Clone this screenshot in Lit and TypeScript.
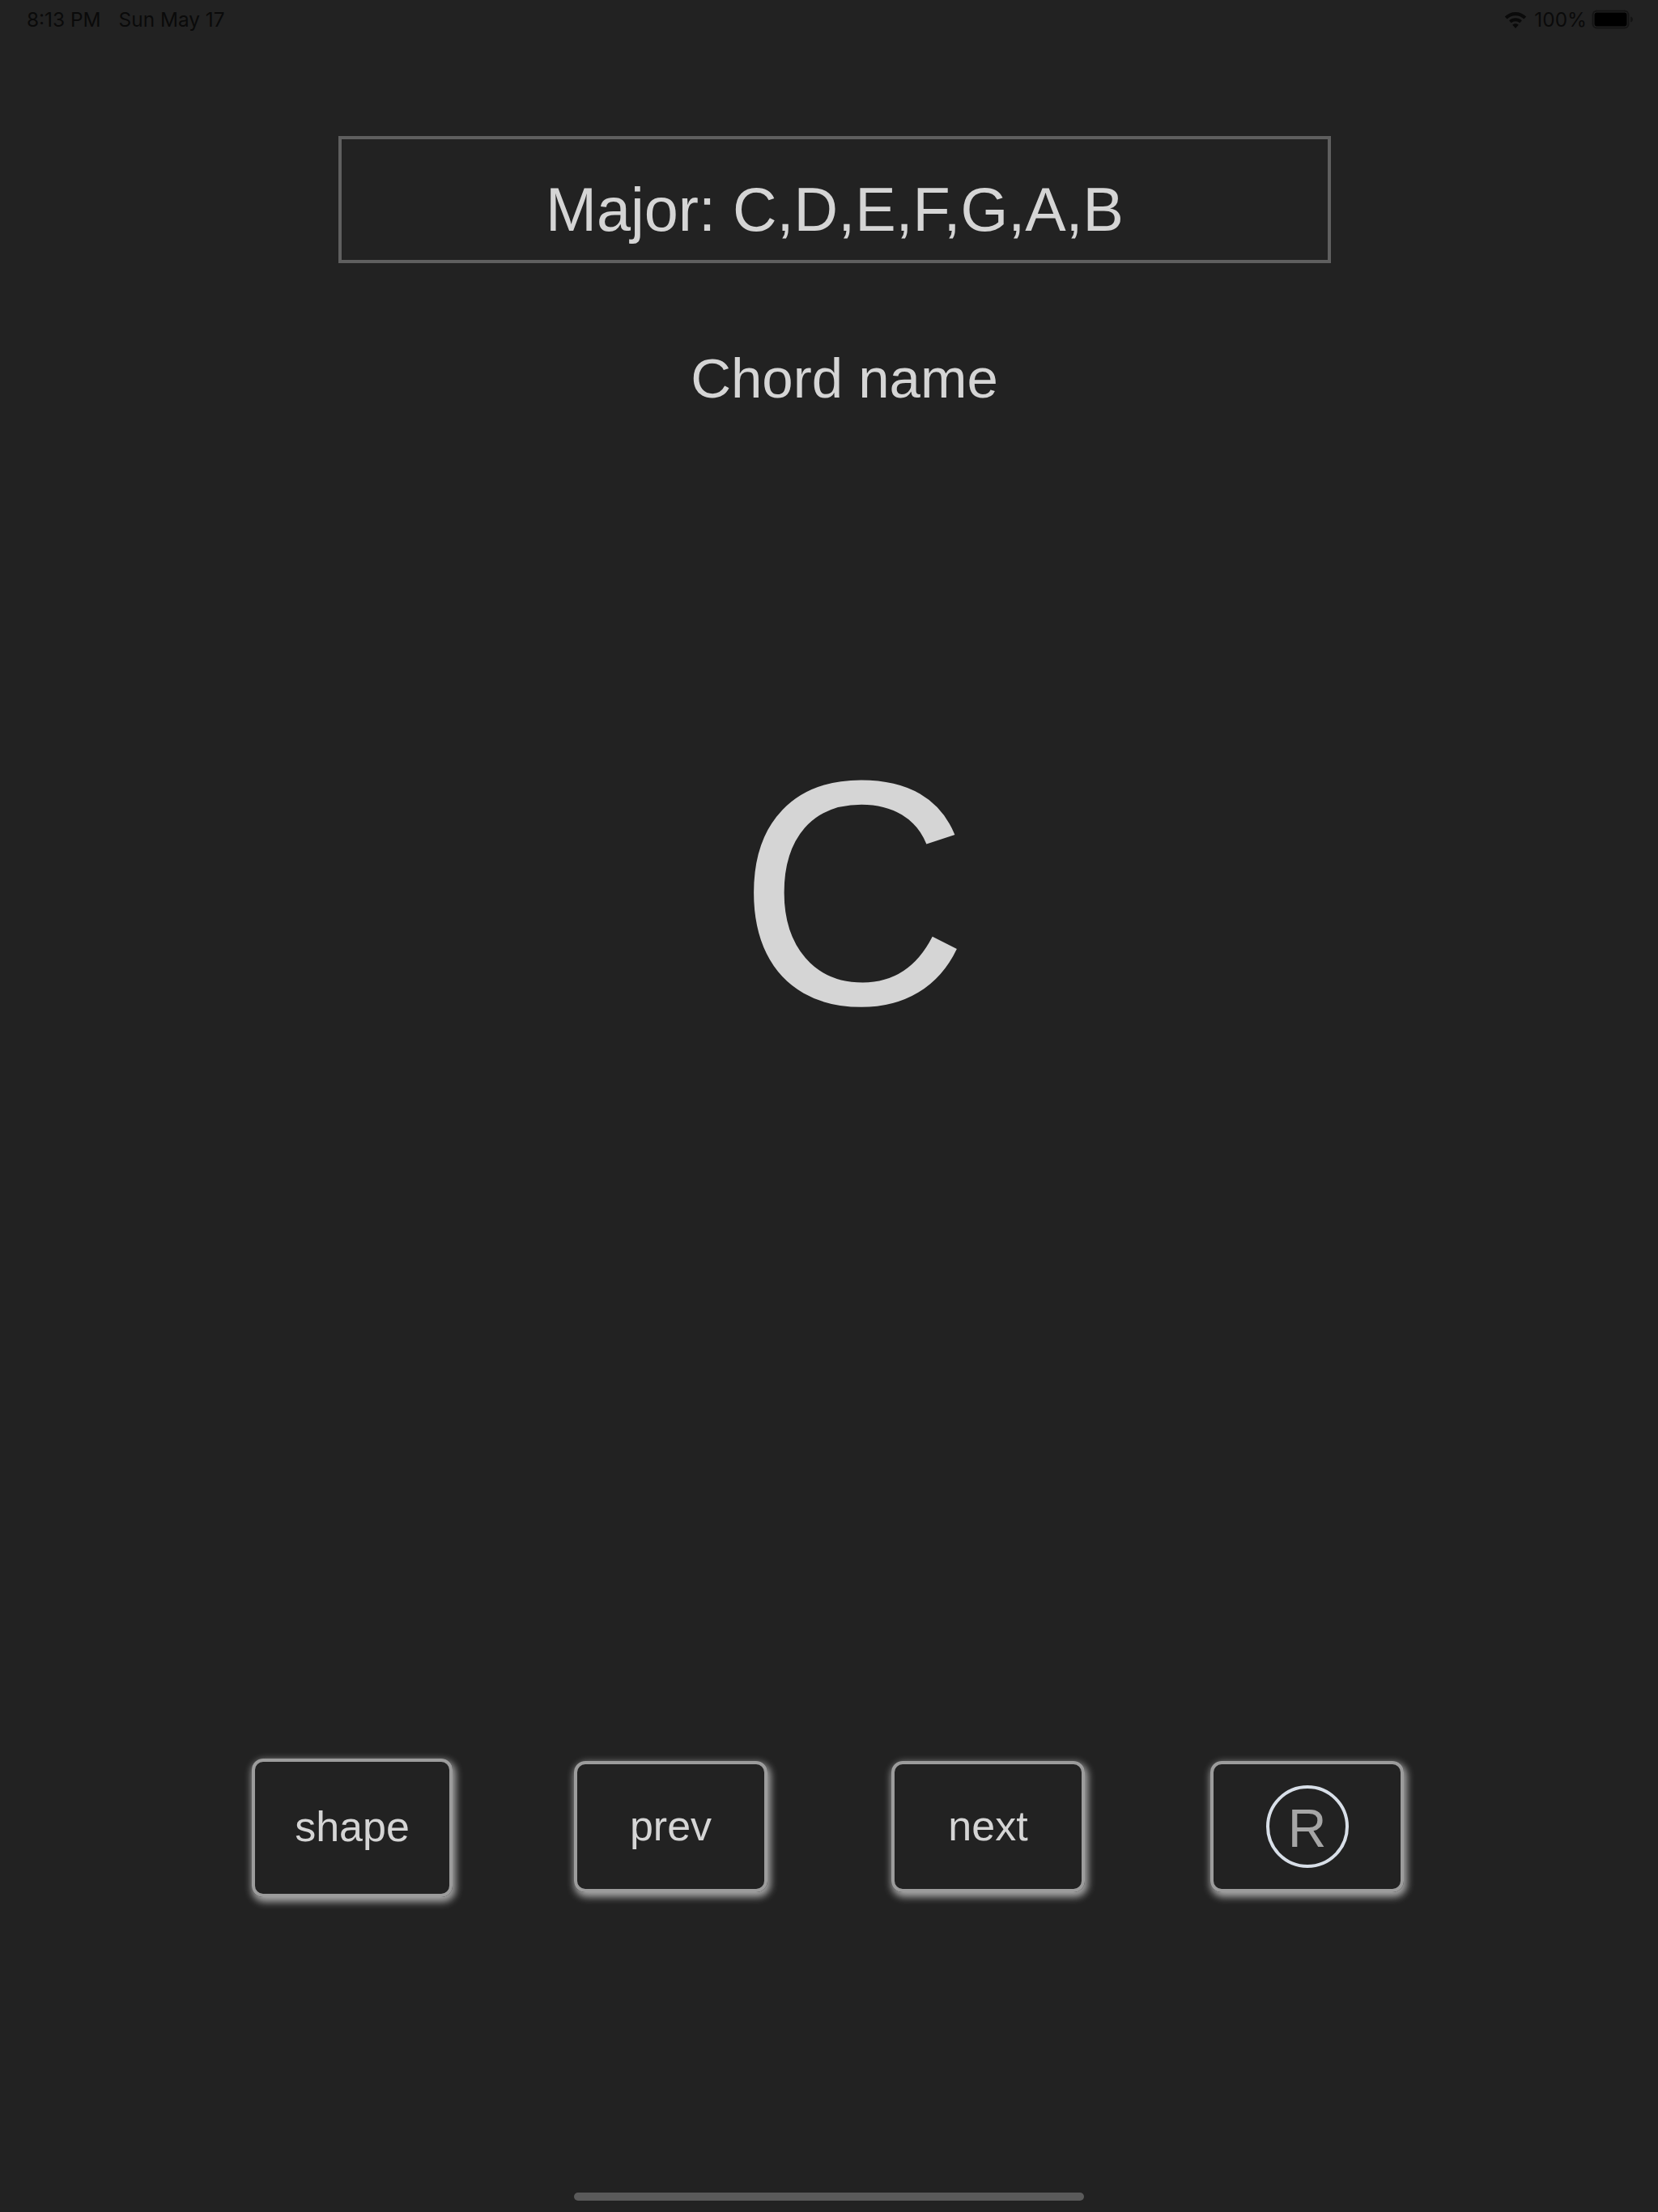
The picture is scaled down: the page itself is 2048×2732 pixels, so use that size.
import { LitElement, html, css } from "lit";
import { customElement } from "lit/decorators.js";

@customElement("app-root")
export class AppRoot extends LitElement {
  static styles = css`
    :host {
      display: block;
      width: 2048px;
      height: 2732px;
      background: #222222;
      font-family: "Liberation Sans", Arial, sans-serif;
      color: #d5d5d5;
      overflow: hidden;
    }
    .page {
      display: flex;
      flex-direction: column;
      height: 2732px;
    }
    .status {
      display: flex;
      justify-content: space-between;
      align-items: center;
      height: 48px;
      padding: 0 30px 0 33px;
      font-family: Inter, "Liberation Sans", sans-serif;
      font-size: 24.4px;
      color: #0a0a0a;
      flex: none;
    }
    .status-left {
      display: flex;
      gap: 22px;
    }
    .status-right {
      display: flex;
      align-items: center;
      gap: 9px;
    }
    .wifi {
      width: 28px;
      height: 22px;
    }
    .battery {
      width: 52px;
      height: 24px;
      margin-left: -3px;
    }
    .scale {
      box-sizing: border-box;
      flex: none;
      margin: 120px 0 0 418px;
      width: 1226px;
      height: 157px;
      border: 4px solid #5f5f5f;
      display: flex;
      align-items: center;
      justify-content: center;
      font-size: 75.6px;
      line-height: 1;
      padding-top: 27px;
    }
    .chord-name {
      flex: none;
      margin: 108px 0 0;
      padding-left: 38px;
      text-align: center;
      font-size: 69px;
      line-height: 1;
    }
    .big {
      flex: none;
      margin: 403px 0 0;
      padding-left: 60px;
      text-align: center;
      font-size: 396px;
      line-height: 1;
    }
    .buttons {
      flex: none;
      display: flex;
      align-items: center;
      margin: 871px 0 0 311px;
    }
    .btn {
      box-sizing: border-box;
      width: 239px;
      height: 162px;
      margin-bottom: 3px;
      padding-bottom: 3px;
      border: 4px solid #9c9c9c;
      border-radius: 14px;
      box-shadow: 2px 4px 10px 2px rgba(255, 255, 255, 0.6);
      display: flex;
      align-items: center;
      justify-content: center;
      font-size: 52px;
      line-height: 1;
      flex: none;
    }
    .btn.shape {
      width: 248px;
      height: 171px;
      margin-right: 150px;
      margin-bottom: 0;
    }
    .btn.prev {
      margin-right: 153px;
    }
    .btn.next {
      margin-right: 155px;
    }
    .btn.reset {
      padding-bottom: 0;
    }
    .r {
      box-sizing: border-box;
      width: 102px;
      height: 102px;
      border: 4px solid #d8dfe8;
      border-radius: 50%;
      display: flex;
      align-items: center;
      justify-content: center;
      color: #a6a6a6;
      font-size: 66px;
      line-height: 1;
      padding-top: 4px;
    }
    .home {
      flex: none;
      margin: auto auto 14px;
      width: 630px;
      height: 10px;
      border-radius: 5px;
      background: #5a5a5a;
    }
  `;

  render() {
    return html`
      <div class="page">
        <div class="status">
          <div class="status-left"><span>8:13 PM</span><span>Sun May 17</span></div>
          <div class="status-right">
            <svg class="wifi" viewBox="0 0 28 22">
              <path fill="#0a0a0a" d="M14 2C9 2 4.400 4 .8 7.500l2.800 3C6.500 7.700 10 6.200 14 6.200s7.500 1.500 10.400 4.300l2.800-3C23.600 4 19 2 14 2z"/>
              <path fill="#0a0a0a" d="M14 9.200c-3 0-5.800 1.200-7.900 3.200l2.700 2.900c1.400-1.300 3.200-2 5.200-2s3.800.7 5.200 2l2.700-2.900c-2.100-2-4.900-3.200-7.900-3.200z"/>
              <path fill="#0a0a0a" d="M14 16.200c-1.500 0-2.800.5-3.700 1.500L14 22l3.700-4.300c-.9-1-2.200-1.500-3.700-1.500z"/>
            </svg>
            <span>100%</span>
            <svg class="battery" viewBox="0 0 52 24">
              <rect x="1.500" y="1.500" width="44" height="21" rx="5" fill="none" stroke="#141414" stroke-width="2"/>
              <rect x="3.500" y="3.500" width="40" height="17" rx="3" fill="#000"/>
              <path d="M48 8.500c2 .6 3 2 3 3.500s-1 2.900-3 3.500z" fill="#141414"/>
            </svg>
          </div>
        </div>
        <div class="scale">Major: C,D,E,F,G,A,B</div>
        <div class="chord-name">Chord name</div>
        <div class="big">C</div>
        <div class="buttons">
          <div class="btn shape">shape</div>
          <div class="btn prev">prev</div>
          <div class="btn next">next</div>
          <div class="btn reset"><div class="r">R</div></div>
        </div>
        <div class="home"></div>
      </div>
    `;
  }
}
